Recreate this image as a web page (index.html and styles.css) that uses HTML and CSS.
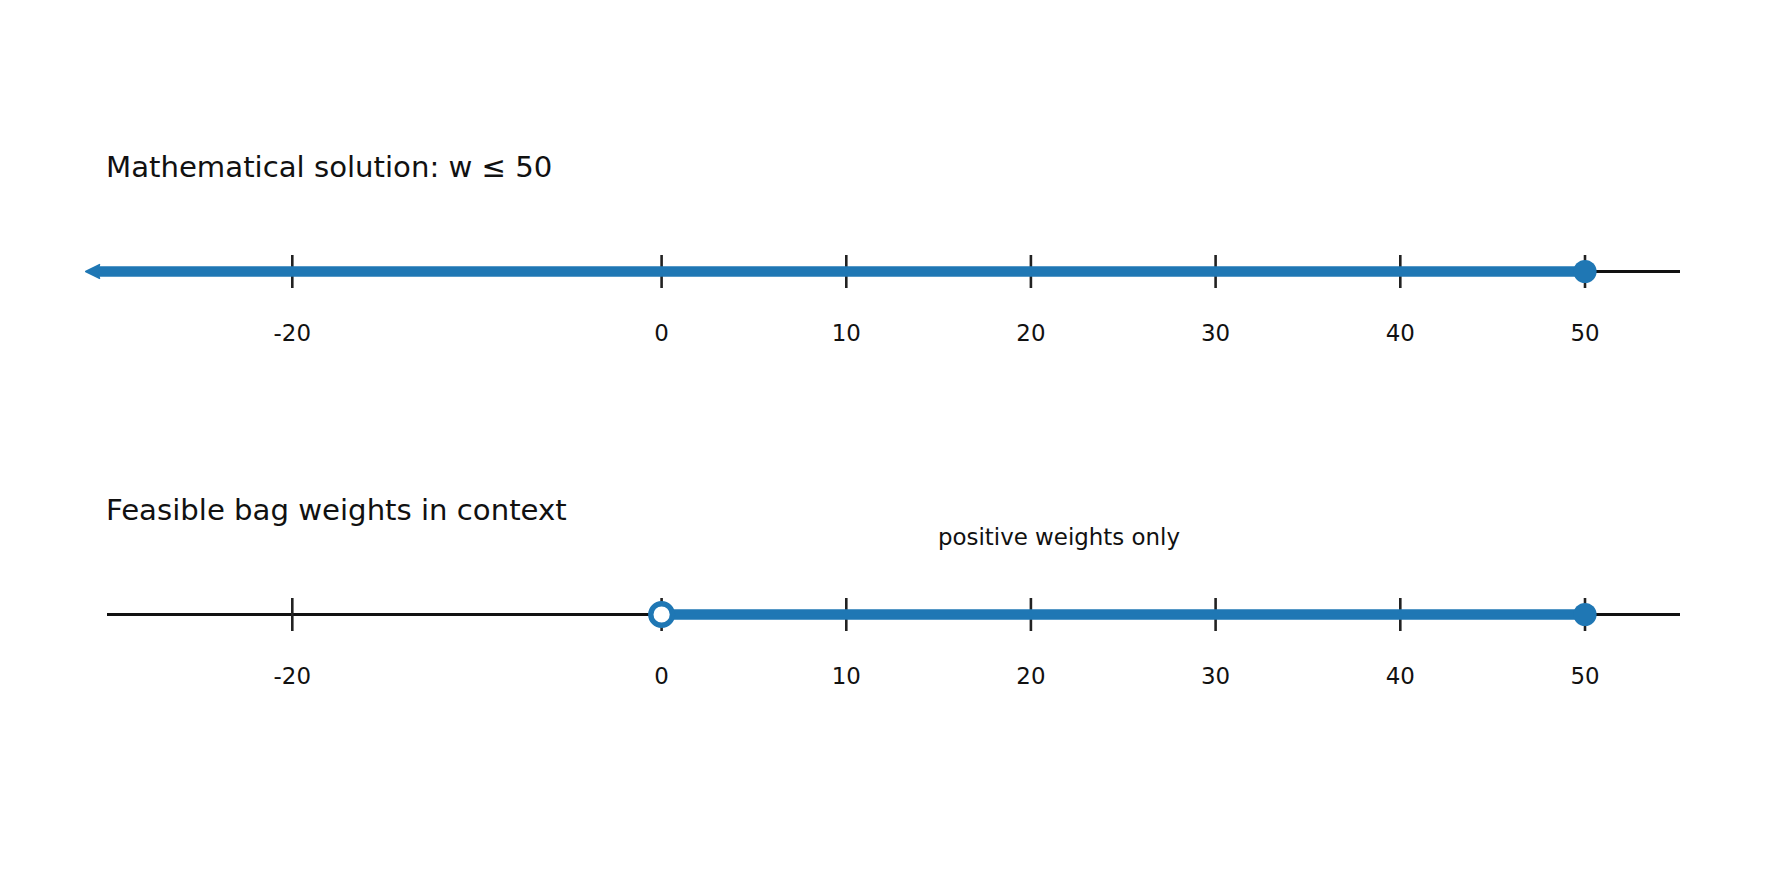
FILE: index.html
```html
<!DOCTYPE html>
<html lang="en">
<head>
<meta charset="utf-8">
<title>Number lines</title>
<link rel="stylesheet" href="styles.css">
</head>
<body>
<div class="figure">
  <section class="panel">
    <h2 class="panel-title">Mathematical solution: w ≤ 50</h2>
    <svg class="axes" width="1785" height="319" viewBox="0 0 1785 319">
      <line class="axis-line" x1="107" y1="92.5" x2="1680" y2="92.5"/>
      <g class="ticks">
        <line x1="292.3" y1="76" x2="292.3" y2="109"/>
        <line x1="661.6" y1="76" x2="661.6" y2="109"/>
        <line x1="846.3" y1="76" x2="846.3" y2="109"/>
        <line x1="1030.9" y1="76" x2="1030.9" y2="109"/>
        <line x1="1215.6" y1="76" x2="1215.6" y2="109"/>
        <line x1="1400.3" y1="76" x2="1400.3" y2="109"/>
        <line x1="1585" y1="76" x2="1585" y2="109"/>
      </g>
      <line class="solution" x1="98" y1="92.5" x2="1585" y2="92.5"/>
      <polygon class="arrow-head" points="85.7,92.5 99.5,85.6 97.5,92.5 99.5,99.4"/>
      <circle class="dot-closed" cx="1585" cy="92.5" r="11.6"/>
      <g class="tick-labels">
        <text x="292.3" y="162">-20</text>
        <text x="661.6" y="162">0</text>
        <text x="846.3" y="162">10</text>
        <text x="1030.9" y="162">20</text>
        <text x="1215.6" y="162">30</text>
        <text x="1400.3" y="162">40</text>
        <text x="1585" y="162">50</text>
      </g>
    </svg>
  </section>
  <section class="panel">
    <h2 class="panel-title">Feasible bag weights in context</h2>
    <svg class="axes" width="1785" height="319" viewBox="0 0 1785 319">
      <text class="note" x="1059" y="23">positive weights only</text>
      <line class="axis-line" x1="107" y1="92.5" x2="1680" y2="92.5"/>
      <g class="ticks">
        <line x1="292.3" y1="76" x2="292.3" y2="109"/>
        <line x1="661.6" y1="76" x2="661.6" y2="109"/>
        <line x1="846.3" y1="76" x2="846.3" y2="109"/>
        <line x1="1030.9" y1="76" x2="1030.9" y2="109"/>
        <line x1="1215.6" y1="76" x2="1215.6" y2="109"/>
        <line x1="1400.3" y1="76" x2="1400.3" y2="109"/>
        <line x1="1585" y1="76" x2="1585" y2="109"/>
      </g>
      <line class="solution" x1="661.6" y1="92.5" x2="1585" y2="92.5"/>
      <circle class="dot-open" cx="661.6" cy="92.5" r="10.8"/>
      <circle class="dot-closed" cx="1585" cy="92.5" r="11.6"/>
      <g class="tick-labels">
        <text x="292.3" y="162">-20</text>
        <text x="661.6" y="162">0</text>
        <text x="846.3" y="162">10</text>
        <text x="1030.9" y="162">20</text>
        <text x="1215.6" y="162">30</text>
        <text x="1400.3" y="162">40</text>
        <text x="1585" y="162">50</text>
      </g>
    </svg>
  </section>
</div>
</body>
</html>
```
FILE: styles.css
```css
html, body {
  margin: 0;
  padding: 0;
  background: #ffffff;
}

body {
  width: 1785px;
  height: 885px;
  overflow: hidden;
  font-family: "DejaVu Sans", "Liberation Sans", sans-serif;
  color: #111111;
}

.figure {
  display: flex;
  flex-direction: column;
  padding-top: 155px;
}

.panel {
  height: 343px;
  display: flex;
  flex-direction: column;
}

.panel-title {
  margin: 0;
  padding-left: 106px;
  font-size: 29.17px;
  font-weight: normal;
  line-height: 24px;
  height: 24px;
  color: #111111;
}

.axes {
  display: block;
  overflow: visible;
}

.axis-line {
  stroke: #111111;
  stroke-width: 3.1;
}

.ticks line {
  stroke: #222222;
  stroke-width: 2.6;
}

.solution {
  stroke: #1f77b4;
  stroke-width: 10.4;
  stroke-linecap: butt;
}

.arrow-head {
  fill: #1f77b4;
  stroke: #1f77b4;
  stroke-width: 1.5;
  stroke-linejoin: round;
}

.dot-closed {
  fill: #1f77b4;
}

.dot-open {
  fill: #ffffff;
  stroke: #1f77b4;
  stroke-width: 5.4;
}

.tick-labels text {
  font-family: "DejaVu Sans", "Liberation Sans", sans-serif;
  font-size: 22.92px;
  fill: #111111;
  text-anchor: middle;
}

.note {
  font-family: "DejaVu Sans", "Liberation Sans", sans-serif;
  font-size: 22.92px;
  fill: #111111;
  text-anchor: middle;
}
```
